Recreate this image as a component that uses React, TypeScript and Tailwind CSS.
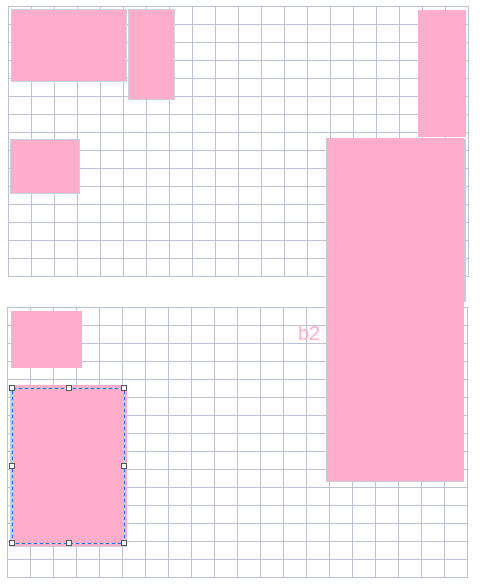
import React from "react";

const COLS = 20;
const ROWS = 15;

function GridPanel({ className }: { className?: string }) {
  const cells = Array.from({ length: COLS * ROWS });
  return (
    <div
      className={
        "grid grid-cols-[repeat(20,23px)] grid-rows-[repeat(15,18px)] border-r border-b border-[#bcc3d7] w-fit " +
        (className ?? "")
      }
    >
      {cells.map((_, i) => (
        <div key={i} className="border-l border-t border-[#bcc3d7]" />
      ))}
    </div>
  );
}

type Box = { x: number; y: number; w: number; h: number; edged?: boolean };

// blocks sit on the canvas at their own coordinates
const boxes: Box[] = [
  { x: 11, y: 9, w: 116, h: 73, edged: true },
  { x: 128, y: 9, w: 47, h: 91, edged: true },
  { x: 418, y: 10, w: 48, h: 127 },
  { x: 10, y: 139, w: 70, h: 55, edged: true },
  { x: 11, y: 311, w: 71, h: 57 },
];

function Handle({ x, y }: { x: number; y: number }) {
  return (
    <div
      className="absolute w-[6px] h-[6px] bg-white border border-[#555]"
      style={{ left: x - 3, top: y - 3 }}
    />
  );
}

export default function App() {
  const handles = [
    [12, 388],
    [69, 388],
    [124, 388],
    [12, 466],
    [124, 466],
    [12, 543],
    [69, 543],
    [124, 543],
  ];

  return (
    <div className="relative w-[485px] h-[586px] bg-white overflow-hidden font-['Liberation_Sans',Arial,sans-serif]">
      <div className="flex flex-col pt-[6px] pl-[8px] gap-[30px]">
        <GridPanel />
        <GridPanel className="-ml-px" />
      </div>

      {boxes.map((b, i) => (
        <div
          key={i}
          className={
            "absolute bg-[#feaeca] " + (b.edged ? "border border-[#cdd0df]" : "")
          }
          style={{ left: b.x, top: b.y, width: b.w, height: b.h }}
        />
      ))}

      {/* b2: placeholder shadow + dragged block */}
      <div className="absolute left-[328px] top-[139px] w-[138px] h-[163px] bg-[#c6cbdc]" />
      <div className="absolute left-[326px] top-[138px] w-[138px] h-[344px] bg-[#feaeca] border-l border-b border-[#c6cbdc]" />
      <div className="absolute left-[298px] top-[323px] text-[20px] leading-none text-[#ffb3cd]">
        b2
      </div>

      {/* selected block */}
      <div className="absolute left-[10px] top-[385px] w-[117px] h-[162px] bg-[#feaeca] border-l border-b border-[#cdd0df]" />
      <svg className="absolute left-0 top-0" width="485" height="586">
        <rect x="12.5" y="388.5" width="112" height="155" fill="none" stroke="#ffffff" strokeWidth="1" />
        <rect
          x="12.5"
          y="388.5"
          width="112"
          height="155"
          fill="none"
          stroke="#1a73e8"
          strokeWidth="1"
          strokeDasharray="4 2"
        />
      </svg>
      {handles.map(([x, y], i) => (
        <Handle key={i} x={x} y={y} />
      ))}
    </div>
  );
}
